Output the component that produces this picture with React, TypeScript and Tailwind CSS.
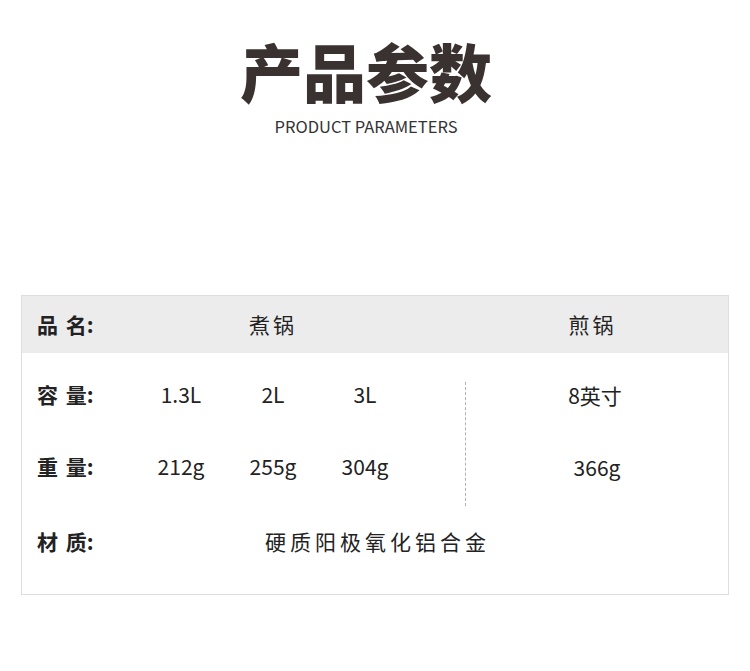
import React from "react";

const font = { fontFamily: '"Noto Sans CJK SC", "Noto Sans", sans-serif' };

export default function App() {
  const sizes = ["1.3L", "2L", "3L"];
  const weights = ["212g", "255g", "304g"];

  return (
    <div className="w-[750px] h-[671px] bg-white text-[#222]" style={font}>
      {/* TITLE */}
      <div className="flex flex-col items-center pt-[38px] pr-[18px]">
        <h1 className="text-[63px] leading-[64px] font-black text-[#3a3230]">
          产品参数
        </h1>
        <p className="mt-[14px] text-[16.5px] leading-[20px] text-[#333]">
          PRODUCT PARAMETERS
        </p>
      </div>

      {/* TABLE */}
      <div className="mx-[21px] mt-[159px] border border-[#dedede]">
        {/* header */}
        <div className="flex items-center h-[57px] bg-[#ececec]">
          <div className="w-[113px] pl-[15px] text-[21px] font-bold text-[#222] [word-spacing:3px]">
            品 名:
          </div>
          <div className="w-[276px] text-center text-[21px] tracking-[3px]">
            煮锅
          </div>
          <div className="w-[54px]" />
          <div className="flex-1 text-center text-[21px] tracking-[3px] -ml-[8px]">
            煎锅
          </div>
        </div>

        {/* body */}
        <div className="pt-[29px] pb-[39px]">
          <div className="flex">
            <div className="w-[443px] flex flex-col gap-[46px] pb-[26px]">
              <div className="flex items-center h-[26px]">
                <div className="w-[113px] pl-[15px] text-[21px] font-bold text-[#222] [word-spacing:3px]">
                  容 量:
                </div>
                {sizes.map((s) => (
                  <div key={s} className="w-[92px] text-center text-[21px]">
                    {s}
                  </div>
                ))}
              </div>
              <div className="flex items-center h-[26px]">
                <div className="w-[113px] pl-[15px] text-[21px] font-bold text-[#222] [word-spacing:3px]">
                  重 量:
                </div>
                {weights.map((w) => (
                  <div key={w} className="w-[92px] text-center text-[21px]">
                    {w}
                  </div>
                ))}
              </div>
            </div>
            <div className="flex-1 flex flex-col items-center gap-[46px] border-l border-dashed border-[#b0b0b0]">
              <div className="h-[26px] leading-[26px] text-[21px] -ml-[4px]">8英寸</div>
              <div className="h-[26px] leading-[26px] text-[21px]">366g</div>
            </div>
          </div>

          <div className="flex items-center h-[26px] mt-[23px]">
            <div className="w-[113px] pl-[15px] text-[21px] font-bold text-[#222] [word-spacing:3px]">
              材 质:
            </div>
            <div className="pl-[130px] text-[21px] tracking-[4px]">
              硬质阳极氧化铝合金
            </div>
          </div>
        </div>
      </div>
    </div>
  );
}
